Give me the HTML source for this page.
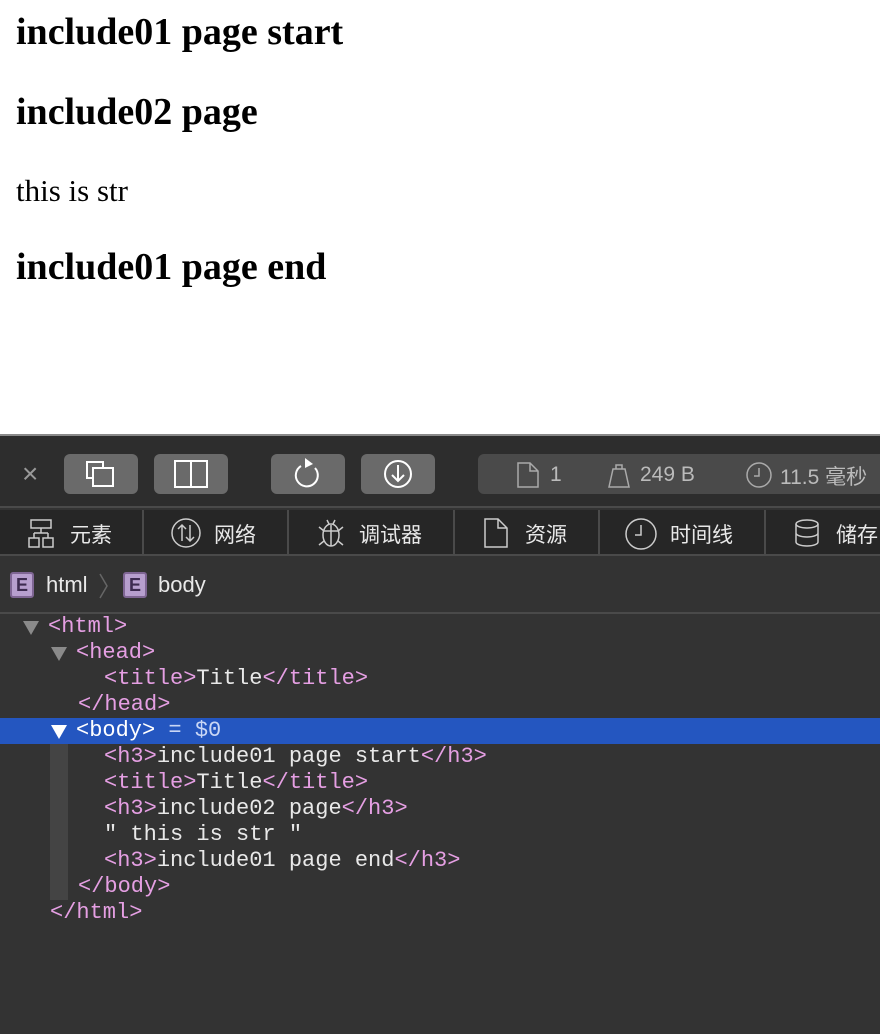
<!DOCTYPE html>
<html><head><meta charset="utf-8"><style>
*{margin:0;padding:0;box-sizing:border-box}
body{width:880px;height:1034px;overflow:hidden;background:#fff;position:relative;font-family:"Liberation Serif",serif}
.t{position:absolute;left:16px;white-space:nowrap;color:#000;line-height:1}
.h{font-weight:bold;font-size:38px}
.p{font-size:31px}
#dev{position:absolute;left:0;top:434px;width:880px;height:600px;background:#333;border-top:2px solid #8a8a8a}
.tb{position:absolute;top:0;left:0;width:880px;height:72px;background:#2d2d2d;border-bottom:2px solid #4a4a4a}
.btn{position:absolute;top:18px;height:40px;background:#6a6a6a;border-radius:6px}
.tabs{position:absolute;top:74px;left:0;width:880px;height:46px;background:#262626;border-bottom:2px solid #4a4a4a;font-family:"Liberation Sans","Noto Sans CJK SC",sans-serif;color:#e8e8e8;font-size:21px}
.tab{position:absolute;top:0;height:46px;border-right:2px solid #4a4a4a;display:flex;align-items:center}
.tab span{position:absolute;top:9px}
.bc{position:absolute;top:122px;left:0;width:880px;height:56px;border-bottom:2px solid #4a4a4a;font-family:"Liberation Sans",sans-serif;color:#e8e8e8;font-size:22px}
.E{position:absolute;top:14px;width:24px;height:26px;background:#b79fce;border:2px solid #7f6694;border-radius:3px;color:#3d2b50;font-size:18px;font-weight:bold;text-align:center;line-height:22px}
.tree{position:absolute;top:178px;left:0;width:880px;font-family:"Liberation Mono",monospace;font-size:22px;line-height:26px;color:#e8e8e8}
.ln{position:absolute;white-space:pre;height:26px}
.tg{color:#e59fe3}
.sel{position:absolute;left:0;width:880px;height:26px;background:#2456c0}
.tri{position:absolute;width:0;height:0;border-left:8px solid transparent;border-right:8px solid transparent;border-top:14px solid #8a8a8a}
</style></head><body>
<div class="t h" style="top:13px">include01 page start</div>
<div class="t h" style="top:93px">include02 page</div>
<div class="t p" style="top:175px">this is str</div>
<div class="t h" style="top:248px">include01 page end</div>

<div id="dev">
<div class="tb">
<div style="position:absolute;left:22px;top:22px;color:#999;font:28px 'Liberation Sans',sans-serif">×</div>
<div class="btn" style="left:64px;width:74px"><svg width="74" height="40"><rect x="23" y="8" width="16" height="16" fill="none" stroke="#fff" stroke-width="2"/><rect x="29" y="14" width="20" height="18" fill="#6a6a6a" stroke="#fff" stroke-width="2"/></svg></div>
<div class="btn" style="left:154px;width:74px"><svg width="74" height="40"><rect x="21" y="7" width="32" height="26" fill="none" stroke="#fff" stroke-width="2"/><line x1="37" y1="7" x2="37" y2="33" stroke="#fff" stroke-width="2"/></svg></div>
<div class="btn" style="left:271px;width:74px"><svg width="74" height="40"><path d="M30 12 A11 11 0 1 0 44 14" fill="none" stroke="#fff" stroke-width="2"/><path d="M34 4 L42 10 L34 14 Z" fill="#fff"/></svg></div>
<div class="btn" style="left:361px;width:74px"><svg width="74" height="40"><circle cx="37" cy="20" r="13" fill="none" stroke="#fff" stroke-width="2"/><path d="M37 11 V27 M31 21 L37 27 L43 21" fill="none" stroke="#fff" stroke-width="2"/></svg></div>
<div class="btn" style="left:478px;width:420px;background:#4a4a4a;font:21px 'Liberation Sans','Noto Sans CJK SC',sans-serif;color:#bbb">
<svg style="position:absolute;left:38px;top:7px" width="24" height="28"><path d="M2 2 H14 L22 10 V26 H2 Z M14 2 V10 H22" fill="none" stroke="#aaa" stroke-width="1.5"/></svg>
<span style="position:absolute;left:72px;top:9px">1</span>
<svg style="position:absolute;left:128px;top:7px" width="26" height="28"><path d="M3 26 L7 8 H19 L23 26 Z M10 8 V4 H16 V8" fill="none" stroke="#aaa" stroke-width="1.5"/></svg>
<span style="position:absolute;left:162px;top:9px">249 B</span>
<svg style="position:absolute;left:266px;top:6px" width="30" height="30"><circle cx="15" cy="15" r="12" fill="none" stroke="#aaa" stroke-width="1.5"/><path d="M15 8 V16 H10" fill="none" stroke="#aaa" stroke-width="1.5"/></svg>
<span style="position:absolute;left:302px;top:7px">11.5 毫秒</span>
</div>
</div>
<div class="tabs">
<div class="tab" style="left:0;width:144px"><svg style="position:absolute;left:26px;top:8px" width="32" height="32"><rect x="5" y="2" width="20" height="8" fill="none" stroke="#ccc" stroke-width="1.5"/><rect x="3" y="20" width="10" height="9" fill="none" stroke="#ccc" stroke-width="1.5"/><rect x="17" y="20" width="10" height="9" fill="none" stroke="#ccc" stroke-width="1.5"/><path d="M15 10 V15 M8 15 H22 M8 15 V20 M22 15 V20" stroke="#ccc" stroke-width="1.5" fill="none"/></svg><span style="left:70px">元素</span></div>
<div class="tab" style="left:144px;width:145px"><svg style="position:absolute;left:26px;top:7px" width="32" height="32"><circle cx="16" cy="16" r="14" fill="none" stroke="#ccc" stroke-width="1.5"/><path d="M12 8 V24 M8 12 L12 8 L16 12 M20 8 V24 M16 20 L20 24 L24 20" stroke="#ccc" stroke-width="1.5" fill="none"/></svg><span style="left:70px">网络</span></div>
<div class="tab" style="left:289px;width:166px"><svg style="position:absolute;left:27px;top:7px" width="30" height="32"><ellipse cx="15" cy="18" rx="8" ry="11" fill="none" stroke="#ccc" stroke-width="1.5"/><path d="M15 8 V29 M7 14 H23 M3 10 L8 14 M27 10 L22 14 M3 28 L8 24 M27 28 L22 24 M11 3 L13 7 M19 3 L17 7" stroke="#ccc" stroke-width="1.5" fill="none"/></svg><span style="left:70px">调试器</span></div>
<div class="tab" style="left:455px;width:145px"><svg style="position:absolute;left:28px;top:7px" width="26" height="32"><path d="M2 2 H15 L24 11 V30 H2 Z M15 2 V11 H24" fill="none" stroke="#ccc" stroke-width="1.5"/></svg><span style="left:70px">资源</span></div>
<div class="tab" style="left:600px;width:166px"><svg style="position:absolute;left:24px;top:7px" width="34" height="34"><circle cx="17" cy="17" r="15" fill="none" stroke="#ccc" stroke-width="1.5"/><path d="M17 8 V18 H11" fill="none" stroke="#ccc" stroke-width="1.5"/></svg><span style="left:70px">时间线</span></div>
<div class="tab" style="left:766px;width:130px;border:none"><svg style="position:absolute;left:26px;top:8px" width="30" height="30"><ellipse cx="15" cy="6" rx="11" ry="4" fill="none" stroke="#ccc" stroke-width="1.5"/><path d="M4 6 V24 M26 6 V24 M4 15 A11 4 0 0 0 26 15 M4 24 A11 4 0 0 0 26 24" fill="none" stroke="#ccc" stroke-width="1.5"/></svg><span style="left:70px">储存</span></div>
</div>
<div class="bc">
<div class="E" style="left:10px">E</div><span style="position:absolute;left:46px;top:14px">html</span>
<svg style="position:absolute;left:98px;top:14px" width="12" height="28"><path d="M2 2 L9 14 L2 26" fill="none" stroke="#666" stroke-width="1.5"/></svg>
<div class="E" style="left:123px">E</div><span style="position:absolute;left:158px;top:14px">body</span>
</div>
<div class="tree">
<div class="tri" style="left:23px;top:7px"></div>
<div class="ln" style="left:48px;top:0"><span class="tg">&lt;html&gt;</span></div>
<div class="tri" style="left:51px;top:33px"></div>
<div class="ln" style="left:76px;top:26px"><span class="tg">&lt;head&gt;</span></div>
<div class="ln" style="left:104px;top:52px"><span class="tg">&lt;title&gt;</span>Title<span class="tg">&lt;/title&gt;</span></div>
<div class="ln" style="left:78px;top:78px"><span class="tg">&lt;/head&gt;</span></div>
<div class="sel" style="top:104px"></div>
<div class="tri" style="left:51px;top:111px;border-top-color:#fff"></div>
<div class="ln" style="left:76px;top:104px;color:#fff">&lt;body&gt; <span style="color:#c9d6f5">= $0</span></div>
<div style="position:absolute;left:50px;top:130px;width:18px;height:156px;background:#444"></div>
<div class="ln" style="left:104px;top:130px"><span class="tg">&lt;h3&gt;</span>include01 page start<span class="tg">&lt;/h3&gt;</span></div>
<div class="ln" style="left:104px;top:156px"><span class="tg">&lt;title&gt;</span>Title<span class="tg">&lt;/title&gt;</span></div>
<div class="ln" style="left:104px;top:182px"><span class="tg">&lt;h3&gt;</span>include02 page<span class="tg">&lt;/h3&gt;</span></div>
<div class="ln" style="left:104px;top:208px">" this is str "</div>
<div class="ln" style="left:104px;top:234px"><span class="tg">&lt;h3&gt;</span>include01 page end<span class="tg">&lt;/h3&gt;</span></div>
<div class="ln" style="left:78px;top:260px"><span class="tg">&lt;/body&gt;</span></div>
<div class="ln" style="left:50px;top:286px"><span class="tg">&lt;/html&gt;</span></div>
</div>
</div>
</body></html>
